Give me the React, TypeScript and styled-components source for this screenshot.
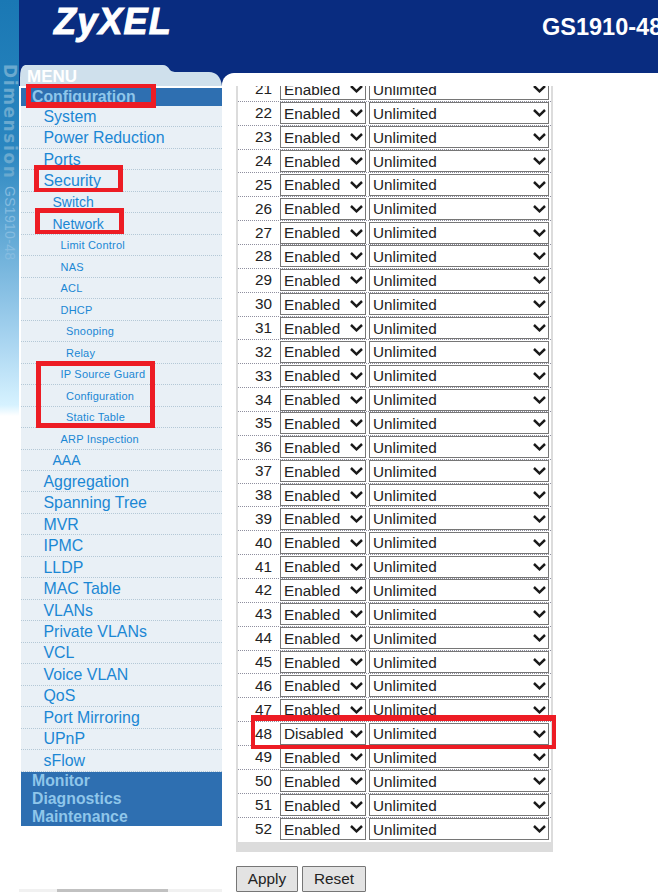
import React from "react";
import styled, { createGlobalStyle } from "styled-components";

const Global = createGlobalStyle`
  html, body { margin: 0; padding: 0; width: 658px; height: 892px; overflow: hidden; background: #fff; }
  * { box-sizing: border-box; }
`;

const Page = styled.div`
  position: relative;
  display: flex;
  width: 658px;
  height: 892px;
  overflow: hidden;
  font-family: "Liberation Sans", Arial, sans-serif;
`;

const Strip = styled.div`
  flex: 0 0 19px;
  height: 100%;
  padding-top: 64px;
  display: flex;
  flex-direction: column;
  align-items: center;
  background: linear-gradient(180deg, #1a78b4 0, #2a86c0 150px, #6cafd9 250px, #a8d4f0 340px, #d6f2ff 405px, #ffffff 416px);
`;

const StripBrand = styled.div`
  writing-mode: vertical-rl;
  font-family: "DejaVu Sans", sans-serif;
  font-weight: 700;
  font-size: 17px;
  line-height: 17px;
  height: 122px;
  letter-spacing: 1.6px;
  color: #6aa9cf;
  white-space: nowrap;
`;

const StripModel = styled.div`
  writing-mode: vertical-rl;
  font-family: "Liberation Sans", sans-serif;
  font-weight: 400;
  font-size: 14px;
  line-height: 17px;
  letter-spacing: 0.3px;
  color: #86bce0;
  white-space: nowrap;
`;

const Right = styled.div`
  flex: 1;
  min-width: 0;
  display: flex;
  flex-direction: column;
  background: #092c80;
`;

const Header = styled.header`
  flex: 0 0 73px;
  display: flex;
  padding-left: 35px;
  overflow: hidden;
  color: #fff;
`;

const Logo = styled.div`
  flex: 0 0 488px;
  padding-top: 1px;
  font-size: 36px;
  line-height: 42px;
  font-weight: 700;
  font-style: italic;
  letter-spacing: 1.2px;
  -webkit-text-stroke: 1px #fff;
`;

const Title = styled.div`
  flex: 0 0 auto;
  padding-top: 14px;
  font-size: 23.5px;
  line-height: 26px;
  font-weight: 700;
  white-space: nowrap;
`;

const Body = styled.div`
  flex: 1;
  min-height: 0;
  display: flex;
`;

const Sidebar = styled.nav`
  flex: 0 0 203px;
  display: flex;
  flex-direction: column;
`;

const Tab = styled.div`
  position: relative;
  height: 22px;
  margin-top: -9px;
  padding: 3px 0 0 8px;
  font-size: 17px;
  line-height: 20px;
  font-weight: 700;
  color: #fff;
`;

const TabShape = styled.svg`
  position: absolute;
  left: 0;
  top: 0;
`;

const TabLabel = styled.span`
  position: relative;
`;

const SideBody = styled.div`
  flex: 1;
  display: flex;
  flex-direction: column;
  padding: 2px 0 0 2px;
  background: #fff;
`;

const Band = styled.div<{ $h: number }>`
  flex: 0 0 auto;
  height: ${(p) => p.$h}px;
  padding-left: 11px;
  background: #2e6fb1;
  color: #8fc6ea;
  font-size: 15.8px;
  font-weight: 700;
  line-height: 18px;
`;

const MenuRow = styled.div<{ $indent: number; $size: number }>`
  flex: 0 0 21.47px;
  display: flex;
  align-items: center;
  padding-left: ${(p) => p.$indent}px;
  padding-top: ${(p) => (p.$size > 15 ? 1 : 0.5)}px;
  background: #e9f0f6;
  border-bottom: 1px dotted #b4c8d6;
  color: #1b87d4;
  font-size: ${(p) => p.$size}px;
  letter-spacing: ${(p) => (p.$size < 12 ? "0.2px" : "0")};
  white-space: nowrap;
`;

const Scrollbar = styled.div`
  margin-top: auto;
  height: 3px;
  margin-left: -2px;
  padding-left: 38px;
  background: #f1f1f1;
`;

const ScrollThumb = styled.div`
  width: 111px;
  height: 3px;
  background: #c1c1c1;
`;

const Main = styled.main`
  flex: 1;
  min-width: 0;
  padding: 13px 0 0 14px;
  background: #fff;
  border-top-left-radius: 12px;
  display: flex;
  flex-direction: column;
  align-items: flex-start;
`;

const TableFrame = styled.div`
  width: 317px;
  height: 766px;
  overflow: hidden;
  border: solid #dcdcdc;
  border-width: 0 2px 10px 2px;
`;

const Rows = styled.div`
  margin-top: -9px;
`;

const Row = styled.div`
  display: flex;
  align-items: center;
  height: 23.87px;
  border-top: 1px dotted #8f8f9f;
  color: #222;
  font-size: 15.3px;
`;

const PortCell = styled.div`
  flex: 0 0 42px;
  padding-right: 8px;
  text-align: right;
`;

const SelectBox = styled.div<{ $w: number; $gap: number }>`
  position: relative;
  flex: 0 0 ${(p) => p.$w}px;
  width: ${(p) => p.$w}px;
  height: 22px;
  margin-right: ${(p) => p.$gap}px;
`;

const Select = styled.select`
  appearance: none;
  display: block;
  width: 100%;
  height: 100%;
  padding: 0 0 0 3px;
  border: 1.5px solid #767676;
  border-radius: 0;
  background: #fff;
  color: #222;
  font-family: "Liberation Sans", Arial, sans-serif;
  font-size: 15.3px;
`;

const Chevron = styled.svg`
  position: absolute;
  right: 3.5px;
  top: 7px;
  pointer-events: none;
`;

const Buttons = styled.div`
  display: flex;
  gap: 4px;
  margin-top: 14px;
`;

const Button = styled.button<{ $w: number }>`
  width: ${(p) => p.$w}px;
  height: 26px;
  padding: 0;
  background: #e3e3e3;
  border: 1.5px solid #767676;
  border-radius: 1px;
  color: #222;
  font-family: "Liberation Sans", Arial, sans-serif;
  font-size: 15.3px;
`;

const RedBox = styled.div<{ $x: number; $y: number; $w: number; $h: number; $t: number; $b: number; $s: number }>`
  position: absolute;
  left: ${(p) => p.$x}px;
  top: ${(p) => p.$y}px;
  width: ${(p) => p.$w}px;
  height: ${(p) => p.$h}px;
  border: solid #ed1c24;
  border-width: ${(p) => p.$t}px ${(p) => p.$s}px ${(p) => p.$b}px;
  pointer-events: none;
`;

const menu: [string, number][] = [
  ["System", 0], ["Power Reduction", 0], ["Ports", 0], ["Security", 0],
  ["Switch", 1], ["Network", 1], ["Limit Control", 2], ["NAS", 2], ["ACL", 2],
  ["DHCP", 2], ["Snooping", 3], ["Relay", 3], ["IP Source Guard", 2],
  ["Configuration", 3], ["Static Table", 3], ["ARP Inspection", 2], ["AAA", 1],
  ["Aggregation", 0], ["Spanning Tree", 0], ["MVR", 0], ["IPMC", 0], ["LLDP", 0],
  ["MAC Table", 0], ["VLANs", 0], ["Private VLANs", 0], ["VCL", 0], ["Voice VLAN", 0],
  ["QoS", 0], ["Port Mirroring", 0], ["UPnP", 0], ["sFlow", 0],
];

const levels = [
  { indent: 22.5, size: 15.9 },
  { indent: 31.5, size: 14 },
  { indent: 39.5, size: 11 },
  { indent: 45, size: 11 },
];

const ports = Array.from({ length: 32 }, (_, i) => 21 + i);

const boxes = [
  { $x: 26, $y: 84, $w: 130, $h: 24, $t: 4, $b: 6, $s: 5 },
  { $x: 34, $y: 165, $w: 89, $h: 27, $t: 5, $b: 4, $s: 5 },
  { $x: 35, $y: 208, $w: 89, $h: 26, $t: 5, $b: 4, $s: 5 },
  { $x: 36, $y: 361, $w: 119, $h: 67, $t: 5, $b: 5, $s: 5 },
  { $x: 251, $y: 715, $w: 305, $h: 34, $t: 6, $b: 4, $s: 4 },
];

const Arrow = () => (
  <Chevron width="13" height="8" viewBox="0 0 13 8">
    <path d="M1 1 L6.5 6.3 L12 1" fill="none" stroke="#1a1a1a" strokeWidth="2.5" />
  </Chevron>
);

const Dropdown = ({ w, gap, value, options }: { w: number; gap: number; value: string; options: string[] }) => (
  <SelectBox $w={w} $gap={gap}>
    <Select defaultValue={value}>
      {options.map((o) => (
        <option key={o}>{o}</option>
      ))}
    </Select>
    <Arrow />
  </SelectBox>
);

export default function App() {
  return (
    <Page>
      <Global />
      <Strip>
        <StripBrand>Dimension</StripBrand>
        <StripModel>GS1910-48</StripModel>
      </Strip>
      <Right>
        <Header>
          <Logo>ZyXEL</Logo>
          <Title>GS1910-48</Title>
        </Header>
        <Body>
          <Sidebar>
            <Tab>
              <TabShape width="203" height="22" viewBox="0 0 203 22">
                <path
                  d="M1 22 L1 14 Q1 2 6 1 L144 1 Q148 1 151 6 Q153 8 158 8 L190 8 Q201 8 203 22 Z"
                  fill="#cfe0ec"
                />
              </TabShape>
              <TabLabel>MENU</TabLabel>
            </Tab>
            <SideBody>
              <Band $h={18}>Configuration</Band>
              {menu.map(([label, level]) => (
                <MenuRow key={label + level} $indent={levels[level].indent} $size={levels[level].size}>
                  {label}
                </MenuRow>
              ))}
              <Band $h={54}>
                Monitor
                <br />
                Diagnostics
                <br />
                Maintenance
              </Band>
              <Scrollbar>
                <ScrollThumb />
              </Scrollbar>
            </SideBody>
          </Sidebar>
          <Main>
            <TableFrame>
              <Rows>
                {ports.map((p) => (
                  <Row key={p}>
                    <PortCell>{p}</PortCell>
                    <Dropdown
                      w={86}
                      gap={3}
                      value={p === 48 ? "Disabled" : "Enabled"}
                      options={["Enabled", "Disabled"]}
                    />
                    <Dropdown w={180} gap={0} value="Unlimited" options={["Unlimited"]} />
                  </Row>
                ))}
              </Rows>
            </TableFrame>
            <Buttons>
              <Button $w={62}>Apply</Button>
              <Button $w={64}>Reset</Button>
            </Buttons>
          </Main>
        </Body>
      </Right>
      {boxes.map((b) => (
        <RedBox key={b.$y} {...b} />
      ))}
    </Page>
  );
}
